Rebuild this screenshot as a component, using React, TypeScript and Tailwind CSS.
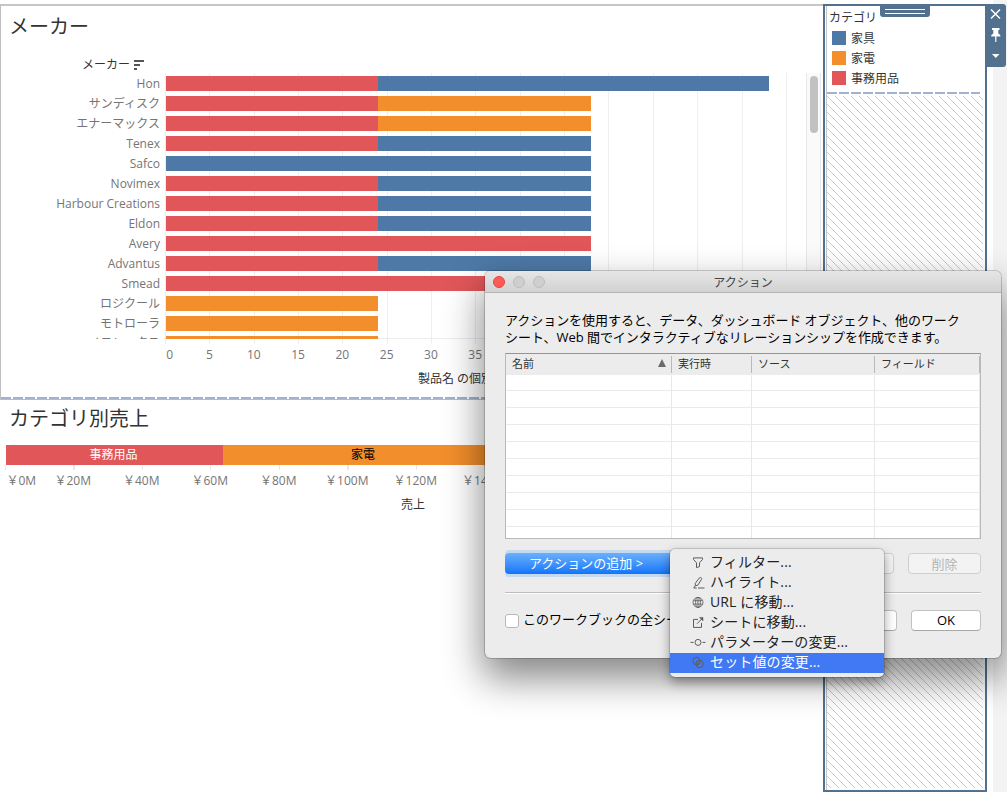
import type { ReactNode } from 'react'
import clsx from 'clsx'

type Segment = { color: string; from: number; to: number }

const red = 'bg-[#e15759]'
const blue = 'bg-[#4e79a7]'
const orange = 'bg-[#f28e2b]'

const makers: { name: string; segments: Segment[] }[] = [
  { name: 'Hon', segments: [{ color: red, from: 0, to: 212 }, { color: blue, from: 212, to: 603 }] },
  { name: 'サンディスク', segments: [{ color: red, from: 0, to: 212 }, { color: orange, from: 212, to: 425 }] },
  { name: 'エナーマックス', segments: [{ color: red, from: 0, to: 212 }, { color: orange, from: 212, to: 425 }] },
  { name: 'Tenex', segments: [{ color: red, from: 0, to: 212 }, { color: blue, from: 212, to: 425 }] },
  { name: 'Safco', segments: [{ color: blue, from: 0, to: 425 }] },
  { name: 'Novimex', segments: [{ color: red, from: 0, to: 212 }, { color: blue, from: 212, to: 425 }] },
  { name: 'Harbour Creations', segments: [{ color: red, from: 0, to: 212 }, { color: blue, from: 212, to: 425 }] },
  { name: 'Eldon', segments: [{ color: red, from: 0, to: 212 }, { color: blue, from: 212, to: 425 }] },
  { name: 'Avery', segments: [{ color: red, from: 0, to: 425 }] },
  { name: 'Advantus', segments: [{ color: red, from: 0, to: 212 }, { color: blue, from: 212, to: 425 }] },
  { name: 'Smead', segments: [{ color: red, from: 0, to: 425 }] },
  { name: 'ロジクール', segments: [{ color: orange, from: 0, to: 212 }] },
  { name: 'モトローラ', segments: [{ color: orange, from: 0, to: 212 }] },
  { name: 'メモレックス', segments: [{ color: orange, from: 0, to: 212 }] },
]

const countTicks = [0, 5, 10, 15, 20, 25, 30, 35]
const salesTicks = [0, 20, 40, 60, 80, 100, 120, 140]

const legend = [
  { label: '家具', color: blue },
  { label: '家電', color: orange },
  { label: '事務用品', color: red },
]

const columns = [
  { label: '名前', width: 'w-[166px]', sorted: true },
  { label: '実行時', width: 'w-[80px]' },
  { label: 'ソース', width: 'w-[123px]' },
  { label: 'フィールド', width: 'w-[105px]' },
]

const dashes =
  'h-[2px] bg-[repeating-linear-gradient(90deg,#a0b2d0_0px,#a0b2d0_10px,transparent_10px,transparent_12px)]'

function MenuIcon({ children }: { children: ReactNode }) {
  return (
    <svg width="16" height="14" viewBox="0 0.6 16 14" fill="none" stroke="#5c5c5c" strokeWidth="1" className="shrink-0">
      {children}
    </svg>
  )
}

const menuItems: { label: string; icon: ReactNode }[] = [
  { label: 'フィルター...', icon: <path d="M3.5 2.5h9v1.6L9.5 7.4v3.8l-3 1V7.4l-3-3.3z" /> },
  {
    label: 'ハイライト...',
    icon: (
      <>
        <path d="M5.2 8 9.3 2.6q1-.9 1.9-.2.8.7.2 1.8L7.8 9.8l-2.4.6z" />
        <path d="M5.3 10.3l-1.6 2.3h3M8 12.6h6.5" />
      </>
    ),
  },
  {
    label: 'URL に移動...',
    icon: (
      <g strokeWidth="0.85">
        <circle cx="8" cy="7" r="5" />
        <ellipse cx="8" cy="7" rx="2.4" ry="5" />
        <path d="M8 2v10M3.5 5.3h9M3.5 8.7h9" />
      </g>
    ),
  },
  {
    label: 'シートに移動...',
    icon: (
      <>
        <path d="M8 4H3.5v8h8V7.5M7 8.3l5-5" />
        <path d="M9.5 2H13v3.5z" fill="#5c5c5c" strokeWidth="0.5" />
      </>
    ),
  },
  {
    label: 'パラメーターの変更...',
    icon: (
      <>
        <circle cx="8" cy="7" r="3" />
        <path d="M.5 7h3M12.5 7h3" />
      </>
    ),
  },
  {
    label: 'セット値の変更...',
    icon: (
      <>
        <circle cx="6.6" cy="5.7" r="3.7" />
        <circle cx="9.6" cy="8.5" r="3.7" />
        <path d="M7 5.6l3 3M6.2 7l2.6 2.6" strokeWidth="0.8" />
      </>
    ),
  },
]

function MakerSheet() {
  return (
    <section className="flex h-[396px] flex-col border-l border-t-2 border-[#c6c6c6] border-l-[#c0c0c0]">
      <h2 className="h-[49px] pl-[8px] pt-[6px] text-[20px] leading-[30px] text-[#333]">メーカー</h2>
      <div className="flex h-[18px] items-center justify-end gap-[3px] self-start pl-[81px] pt-px text-[12px] text-[#333]">
        メーカー
        <svg width="12" height="12" viewBox="0 0 12 12" fill="#555">
          <path d="M1 1h10v2H1zM1 5h6v2H1zM1 9h3v2H1z" />
        </svg>
      </div>

      <div className="relative flex h-[266px] overflow-hidden">
        <div className="w-[164px] pt-px">
          {makers.map((m, i) => (
            <div
              key={m.name}
              className={clsx(
                'h-5 whitespace-nowrap pr-[5px] text-right text-[12px] text-[#757575]',
                i === 13 ? 'leading-[17px]' : 'leading-[19px]',
              )}
            >
              {m.name}
            </div>
          ))}
        </div>
        <div className="w-[641px] border-b border-[#ececec] bg-[repeating-linear-gradient(90deg,#efefef_0px,#efefef_1px,transparent_1px,transparent_44.35px)]">
          <div className="pl-px pt-[3px]">
            {makers.map((m) => (
              <div key={m.name} className="mb-[5px] flex h-[15px]">
                {m.segments.map((s) => (
                  <div key={s.from} className={s.color} style={{ width: s.to - s.from }} />
                ))}
              </div>
            ))}
          </div>
        </div>
        <div className="w-[15px] border-x border-[#e8e8e8] bg-[#fafafa] pl-[3px] pt-[3px]">
          <div className="h-[57px] w-2 rounded-full bg-[#c1c1c1]" />
        </div>
      </div>

      <div className="ml-[164px] h-[5px] w-[642px] bg-[repeating-linear-gradient(90deg,#efefef_0px,#efefef_1px,transparent_1px,transparent_44.35px)]" />
      <div className="ml-[142px] flex h-5 text-[12px] leading-[21px] text-[#757575]">
        {countTicks.map((t) => (
          <span key={t} className={clsx('w-[44.3px] shrink-0 text-center', t === 0 && 'pl-[9px]')}>
            {t}
          </span>
        ))}
      </div>
      <div className="ml-[164px] mt-[5px] w-[641px] text-center text-[12px] leading-5 text-[#333]">
        製品名 の個別のカウント
      </div>
      <div className={clsx('mt-auto', dashes)} />
      <div className="h-px bg-[#bcbcbc]" />
    </section>
  )
}

function SalesSheet() {
  return (
    <section>
      <h2 className="h-[45px] pl-[9px] pt-[4px] text-[20px] leading-[30px] text-[#333]">カテゴリ別売上</h2>
      <div className="flex h-5 pl-[6px] text-center text-[12px] leading-[19px]">
        <div className={clsx('w-[217px] pr-[2px] text-white', red)}>事務用品</div>
        <div className={clsx('w-[280px] text-black', orange)}>家電</div>
        <div className={clsx('w-[312px] text-white', blue)}>家具</div>
      </div>
      <div className="ml-[5px] h-[5px] bg-[repeating-linear-gradient(90deg,#e8e8e8_0px,#e8e8e8_1px,transparent_1px,transparent_68.5px)]" />
      <div className="ml-[-30px] flex text-[12px] leading-[21px] text-[#757575]">
        {salesTicks.map((t) => (
          <span key={t} className={clsx('w-[68.5px] shrink-0 text-center', t === 0 && 'pl-[34px]')}>
            ￥{t}M
          </span>
        ))}
      </div>
      <div className="mt-[4px] w-[826px] text-center text-[12px] leading-5 text-[#333]">売上</div>
    </section>
  )
}

function LegendPane() {
  return (
    <aside className="relative mt-1 flex h-[788px] w-[164px] flex-col border-2 border-[#51718f] bg-white pl-px">
      <div className="absolute left-[55px] top-[-2px] flex h-[13px] w-[50px] flex-col justify-center gap-[3px] rounded-b-[3px] bg-[#51718f] px-[5px] pt-[2px]">
        <div className="h-px bg-white" />
        <div className="h-px bg-white" />
      </div>
      <div className="flex grow flex-col border-l border-[#c4c4c4]">
        <div className="h-[86px] pl-[2px] text-[12px] text-[#333]">
          <div className="h-[22px] leading-[24px]">カテゴリ</div>
          {legend.map((l) => (
            <div key={l.label} className="flex h-5 items-center gap-[5px] pl-[3px]">
              <span className={clsx('h-[14px] w-[14px]', l.color)} />
              <span className="leading-[19px]">{l.label}</span>
            </div>
          ))}
        </div>
        <div className={clsx('w-[153px]', dashes)} />
        <svg className="mt-[2px] h-[692px] w-[156px]" shapeRendering="crispEdges">
          <defs>
            <pattern id="hatch" width="8" height="8" patternUnits="userSpaceOnUse">
              <path
                d="M0 0h1v1H0zM1 1h1v1H1zM2 2h1v1H2zM3 3h1v1H3zM4 4h1v1H4zM5 5h1v1H5zM6 6h1v1H6zM7 7h1v1H7z"
                fill="#c3ccdd"
              />
            </pattern>
          </defs>
          <rect width="156" height="692" fill="url(#hatch)" />
        </svg>
      </div>
    </aside>
  )
}

function PaneTools() {
  return (
    <div className="flex grow">
      <div className="absolute left-[987px] top-1 z-10 h-[63px] w-[19px] rounded-r-[3px] bg-[#51718f]">
        <svg width="19" height="63" viewBox="0 0 19 63" fill="none" stroke="#fff">
          <path d="M4 5.5l9 9M13 5.5l-9 9" strokeWidth="1.5" />
          <path d="M5 24h7.5v2h-1.2v3.5l2 1.5v1.5h-9V31l2-1.5V26H5zM8.2 32.5h1.2V38H8.2z" fill="#fff" stroke="none" />
          <path d="M5 50h7.5l-3.7 4z" fill="#fff" stroke="none" />
        </svg>
      </div>
      <div className="ml-[6px] grow bg-[#f3f3f3]" />
    </div>
  )
}

function ActionDialog() {
  return (
    <div className="absolute left-[485px] top-[271px] z-20 h-[387px] w-[516px] rounded-[6px] bg-[#ececec] text-black shadow-[0_0_0_1px_rgba(0,0,0,0.18),0_18px_38px_2px_rgba(0,0,0,0.48)]">
      <div className="relative flex h-[22px] items-center rounded-t-[6px] border-b border-[#b4b4b4] bg-gradient-to-b from-[#e6e6e6] to-[#d2d2d2] pl-[8px]">
        <div className="flex gap-2">
          <span className="h-3 w-3 rounded-full border border-[#e2463f] bg-[#fc5b57]" />
          <span className="h-3 w-3 rounded-full border border-[#bdbdbd] bg-[#cfcfcf]" />
          <span className="h-3 w-3 rounded-full border border-[#bdbdbd] bg-[#cfcfcf]" />
        </div>
        <span className="absolute inset-x-0 pt-[2px] text-center text-[12px] text-[#444]">アクション</span>
      </div>

      <div className="px-5">
        <p className="mt-[19px] whitespace-nowrap text-[13px] leading-[16.5px] tracking-[-0.05px]">
          アクションを使用すると、データ、ダッシュボード オブジェクト、他のワーク
          <br />
          シート、Web 間でインタラクティブなリレーションシップを作成できます。
        </p>

        <div className="mt-[8px] h-[186px] w-[476px] overflow-hidden border border-[#b9b9b9] border-t-[#949494] bg-white">
          <div className="flex h-[21px] items-center bg-[#ececec] text-[11px] text-[#333]">
            {columns.map((c) => (
              <div key={c.label} className={clsx('flex h-[17px] items-center justify-between border-r border-[#b9b9b9] pl-[6px] pr-[5px]', c.width)}>
                {c.label}
                {c.sorted && (
                  <svg width="8" height="8" viewBox="0 0 8 8" fill="#6b6b6b" className="mb-[3px]">
                    <path d="M4 0l4 8H0z" />
                  </svg>
                )}
              </div>
            ))}
          </div>
          <div className="flex h-[163px] bg-[repeating-linear-gradient(180deg,transparent_0px,transparent_15px,#ebebeb_15px,#ebebeb_16px,transparent_16px,transparent_17px)]">
            {columns.map((c) => (
              <div key={c.label} className={clsx('border-r border-[#e8e8e8]', c.width)} />
            ))}
          </div>
        </div>

        <div className="mt-[14px] flex h-[21px] text-[13px]">
          <button className="h-[21px] w-[180px] rounded-[4px] bg-gradient-to-b from-[#69b0fb] to-[#0d74fb] pr-[18px] leading-[19px] text-white shadow-[0_3px_0_#c5d9ef,0_-3px_0_#c5d9ef]">
            アクションの追加 &gt;
          </button>
          <button className="ml-auto mr-[14px] w-[73px] rounded-[4px] border border-[#cfcfcf] bg-[#f3f3f3] leading-[18px] text-[#b5b5b5]">編集</button>
          <button className="w-[73px] rounded-[4px] border border-[#cfcfcf] bg-[#f3f3f3] leading-[18px] text-[#b5b5b5]">削除</button>
        </div>

        <div className="mt-[18px] h-[2px] border-t border-[#bdbdbd] bg-white" />

        <div className="mt-[16px] flex h-[21px] items-center text-[13px]">
          <span className="h-[14px] w-[14px] rounded-[3px] border border-[#b8b8b8] bg-white" />
          <span className="ml-[4px] whitespace-nowrap pb-[2px]">このワークブックの全シート</span>
          <button className="ml-auto h-[21px] w-[90px] rounded-[4px] border border-[#c2c2c2] border-b-[#a8a8a8] bg-white">キャンセル</button>
          <button className="ml-[14px] h-[21px] w-[70px] rounded-[4px] border border-[#c2c2c2] border-b-[#a8a8a8] bg-white leading-[19px]">
            OK
          </button>
        </div>
      </div>
    </div>
  )
}

function ActionMenu() {
  return (
    <ul className="absolute left-[670px] top-[549px] z-30 h-[128px] w-[214px] rounded-[5px] bg-[#ececec] py-1 shadow-[0_0_0_1px_rgba(0,0,0,0.14),0_5px_12px_rgba(0,0,0,0.4)]">
      {menuItems.map((item, i) => (
        <li
          key={item.label}
          className={clsx(
            'flex h-5 items-center gap-[4.5px] pl-[19.5px] text-[14px] leading-[18px] tracking-[0.13px]',
            i === 5 ? 'bg-[#4178f4] text-white' : 'text-[#222]',
          )}
        >
          <MenuIcon>{item.icon}</MenuIcon>
          <span className="whitespace-nowrap pb-[2px]">{item.label}</span>
        </li>
      ))}
    </ul>
  )
}

export default function App() {
  return (
    <div className="relative flex h-[792px] w-[1007px] overflow-hidden bg-white font-['Open_Sans','Noto_Sans_CJK_JP',sans-serif]">
      <main className="w-[823px] pt-1">
        <MakerSheet />
        <SalesSheet />
      </main>
      <LegendPane />
      <PaneTools />
      <ActionDialog />
      <ActionMenu />
    </div>
  )
}
